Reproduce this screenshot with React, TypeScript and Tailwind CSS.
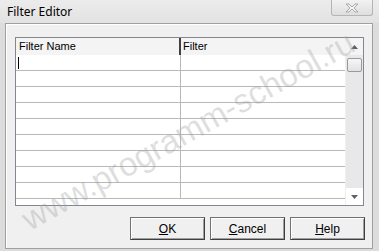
import React from 'react';

// rows below the header of the grid
const ROWS = Array.from({ length: 9 });

function GridBox() {
  return (
    <div className="flex w-[349px] h-[169px] border border-[#828790] bg-white">
      <div className="flex-1 flex flex-col overflow-hidden">
        {/* header */}
        <div className="flex h-[17px] shrink-0 bg-[#f4f4f4] text-[11px] leading-[17px] text-black">
          <div className="w-[165px] pl-[3px] border-r-2 border-[#404040]">Filter Name</div>
          <div className="flex-1 pl-[2px]">Filter</div>
        </div>
        {ROWS.map((_, i) => (
          <div key={i} className="flex h-[16px] shrink-0 border-b border-[#b9b9b9]">
            <div className="w-[165px] border-r border-[#b9b9b9] pl-[2px] pt-[2px]">
              {i === 0 && <div className="w-px h-[12px] bg-black" />}
            </div>
            <div className="flex-1" />
          </div>
        ))}
      </div>
      {/* vertical scrollbar */}
      <div className="w-[18px] flex flex-col bg-[#e8e8e8] border-l border-[#f0f0f0]">
        <div className="h-[17px] bg-[#f4f4f4] flex items-center justify-center">
          <svg width="7" height="4" viewBox="0 0 7 4">
            <path d="M3.5 0L7 4H0z" fill="#606060" />
          </svg>
        </div>
        <div className="mx-[1px] mt-[3px] h-[14px] rounded-[2px] border border-[#9a9a9a] bg-gradient-to-b from-[#f6f6f6] to-[#e2e2e2]" />
        <div className="flex-1" />
        <div className="h-[17px] bg-white flex items-center justify-center">
          <svg width="7" height="4" viewBox="0 0 7 4">
            <path d="M0 0H7L3.5 4z" fill="#606060" />
          </svg>
        </div>
      </div>
    </div>
  );
}

function DlgButton({ label, hot }: { label: string; hot: number }) {
  return (
    <button className="w-[75px] h-[23px] border border-[#707070] border-r-[#404040] border-b-[#404040] bg-[#f0f0f0] text-[12px] text-black shadow-[inset_1px_1px_0_#ffffff,inset_-1px_-1px_0_#a0a0a0]">
      {label.slice(0, hot)}
      <span className="underline">{label[hot]}</span>
      {label.slice(hot + 1)}
    </button>
  );
}

export default function App() {
  return (
    <div
      className="relative w-[379px] h-[251px] overflow-hidden bg-[#dcdcdc] flex flex-col"
      style={{ fontFamily: '"Liberation Sans", Arial, sans-serif' }}
    >
      {/* title bar */}
      <div className="h-[23px] shrink-0 flex justify-between bg-gradient-to-b from-[#ececec] to-[#e2e2e2]">
        <div className="pl-[7px] pt-[3px] text-[12px] text-black" style={{ fontFamily: '"Noto Sans", sans-serif' }}>
          Filter Editor
        </div>
        <div className="mr-[6px] w-[42px] h-[16px] rounded-b-[3px] border border-t-0 border-[#b5b5b5] bg-gradient-to-b from-[#f2f2f2] to-[#dedede] flex items-center justify-center">
          <svg width="14" height="10" viewBox="0 0 14 10">
            <path
              d="M1 1H4L7 4L10 1H13L9 5L13 9H10L7 6L4 9H1L5 5Z"
              fill="#f4f4f4"
              stroke="#a8a8a8"
              strokeWidth="1"
              strokeLinejoin="round"
            />
          </svg>
        </div>
      </div>

      {/* client area */}
      <div className="flex-1 ml-[5px] mr-[6px] mb-[2px] border border-[#a0a0a0] bg-[#f0f0f0] shadow-[inset_1px_1px_0_#ffffff] flex flex-col pt-[13px] pl-[9px]">
        <GridBox />
        <div className="flex justify-end gap-[5px] mt-[11px] pr-[7px]">
          <DlgButton label="OK" hot={0} />
          <DlgButton label="Cancel" hot={0} />
          <DlgButton label="Help" hot={0} />
        </div>
      </div>

      {/* watermark */}
      <div className="pointer-events-none absolute left-[-22px] top-[106px] w-[420px] text-center -rotate-[29deg] text-[33px] text-[#a0a0a0]/35 whitespace-nowrap">
        www.programm-school.ru
      </div>
    </div>
  );
}
